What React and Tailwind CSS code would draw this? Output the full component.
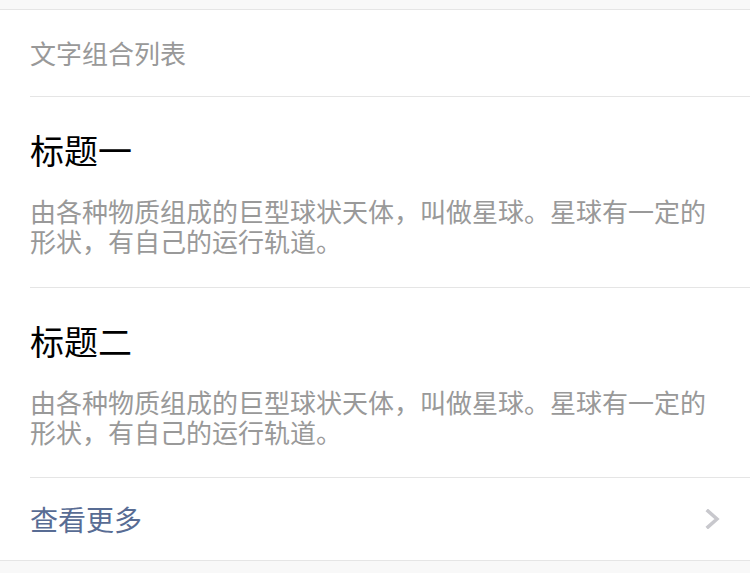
const font = { fontFamily: '"Noto Sans CJK SC", "Noto Sans", sans-serif' };

const items = [
  {
    title: '标题一',
    desc: '由各种物质组成的巨型球状天体，叫做星球。星球有一定的形状，有自己的运行轨道。',
  },
  {
    title: '标题二',
    desc: '由各种物质组成的巨型球状天体，叫做星球。星球有一定的形状，有自己的运行轨道。',
  },
];

const App = () => {
  return (
    <div className="min-h-screen bg-[#f8f8f8] pt-[9px]" style={font}>
      <div className="bg-white border-t border-b border-[#e5e5e5]">
        <div className="ml-[30px] py-[28px] text-[26px] leading-[30px] text-[#999999]">
          文字组合列表
        </div>

        {items.map((item, i) => (
          <div
            key={i}
            className={
              'ml-[30px] pr-[30px] pt-[30px] border-t border-[#e5e5e5] ' +
              (i === 0 ? 'pb-[31px]' : 'pb-[30px]')
            }
          >
            <h4 className="text-[34px] leading-[46px] font-normal text-black mb-[23px]">
              {item.title}
            </h4>
            <p className="text-[26px] leading-[30px] text-[#999999]">{item.desc}</p>
          </div>
        ))}

        <div className="ml-[30px] pr-[30px] py-[20px] border-t border-[#e5e5e5] flex items-center justify-between">
          <span className="text-[28px] leading-[42px] text-[#586c94]">查看更多</span>
          <svg width="16" height="20" viewBox="0 0 16 20" className="mr-[-1px]">
            <polyline
              points="3,2 12,10 3,18"
              fill="none"
              stroke="#c8c8cd"
              strokeWidth="3.5"
              strokeLinecap="square"
            />
          </svg>
        </div>
      </div>
    </div>
  );
};

export default App;
